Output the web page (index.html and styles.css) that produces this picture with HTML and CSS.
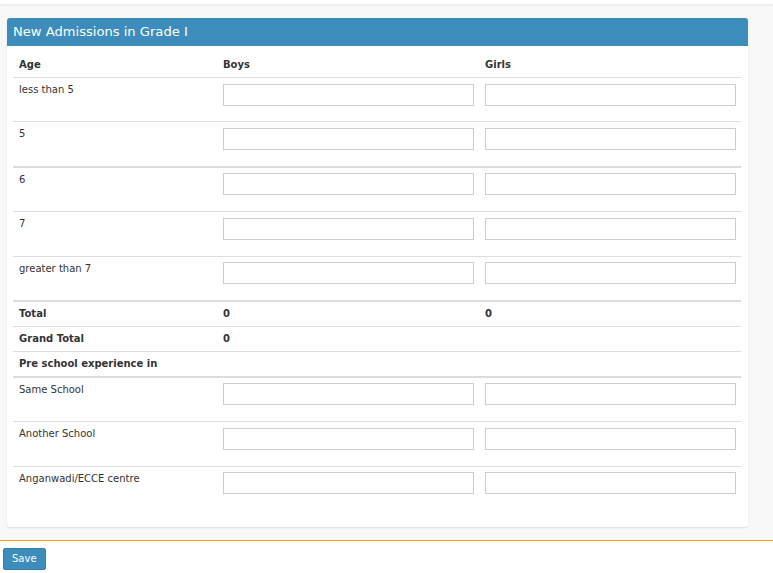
FILE: index.html
```html
<!DOCTYPE html>
<html>
<head>
<meta charset="utf-8">
<link rel="stylesheet" href="styles.css">
</head>
<body>
<div class="topbar"></div>
<div class="content">
  <div class="panel">
    <div class="panel-heading">New Admissions in Grade I</div>
    <div class="panel-body">
      <table class="grid">
        <colgroup><col class="c-age"><col class="c-boys"><col class="c-girls"></colgroup>
        <thead>
          <tr><th>Age</th><th>Boys</th><th>Girls</th></tr>
        </thead>
        <tbody>
          <tr><td>less than 5</td><td><input type="text"></td><td><input type="text"></td></tr>
          <tr><td>5</td><td><input type="text"></td><td><input type="text"></td></tr>
        </tbody>
        <tbody>
          <tr><td>6</td><td><input type="text"></td><td><input type="text"></td></tr>
          <tr><td>7</td><td><input type="text"></td><td><input type="text"></td></tr>
          <tr><td>greater than 7</td><td><input type="text"></td><td><input type="text"></td></tr>
        </tbody>
        <tbody class="summary">
          <tr><td>Total</td><td>0</td><td>0</td></tr>
          <tr><td>Grand Total</td><td>0</td><td></td></tr>
          <tr><td>Pre school experience in</td><td></td><td></td></tr>
        </tbody>
        <tbody>
          <tr><td>Same School</td><td><input type="text"></td><td><input type="text"></td></tr>
          <tr><td>Another School</td><td><input type="text"></td><td><input type="text"></td></tr>
          <tr><td>Anganwadi/ECCE centre</td><td><input type="text"></td><td><input type="text"></td></tr>
        </tbody>
      </table>
    </div>
  </div>
</div>
<div class="footer">
  <button class="btn-save" type="button">Save</button>
</div>
</body>
</html>
```

FILE: styles.css
```css
html, body {
  margin: 0;
  padding: 0;
  background: #fff;
  font-family: "DejaVu Sans", Verdana, sans-serif;
  font-size: 10px;
  color: #333;
}

.topbar {
  height: 4px;
  background: #fff;
  box-shadow: 0 1px 3px rgba(0, 0, 0, 0.08);
  position: relative;
}

.content {
  background: #f8f8f8;
  padding: 14px 25px 13px 7px;
}

.panel {
  background: #fff;
  border-radius: 3px;
  box-shadow: 0 1px 2px rgba(0, 0, 0, 0.1);
}

.panel-heading {
  height: 28px;
  line-height: 28px;
  padding-left: 6px;
  background: #3c8dbc;
  color: #fff;
  font-size: 13.1px;
  border-radius: 3px 3px 0 0;
}

.panel-body {
  padding: 7px 7px 17px 6px;
}

.grid {
  width: 728px;
  border-collapse: collapse;
  table-layout: fixed;
}

.c-age { width: 205px; }
.c-boys { width: 262px; }
.c-girls { width: 261px; }

.grid th,
.grid td {
  padding: 5px;
  line-height: 14px;
  text-align: left;
  vertical-align: top;
}

.grid th:first-child,
.grid td:first-child {
  padding-left: 6px;
}

.grid th {
  font-weight: bold;
}

.grid tbody td {
  border-top: 1px solid #ddd;
}

.grid tbody + tbody tr:first-child td {
  border-top: 2px solid #ddd;
}

.grid .summary td {
  font-weight: bold;
}

.grid input {
  display: block;
  box-sizing: border-box;
  width: 251px;
  height: 22px;
  margin: 0.5px 0 10.9px;
  padding: 2px 5px;
  border: 1px solid #ccc;
  border-radius: 0;
  background: #fff;
  font-family: inherit;
  font-size: 10px;
}

.footer {
  border-top: 1px solid #f39c12;
  padding: 7px 3px;
}

.btn-save {
  display: block;
  height: 22px;
  padding: 3px 8px;
  background: #3c8dbc;
  border: 1px solid #367fa9;
  border-radius: 2px;
  color: #fff;
  font-family: "DejaVu Sans", Verdana, sans-serif;
  font-size: 10px;
  line-height: 14px;
}
```
